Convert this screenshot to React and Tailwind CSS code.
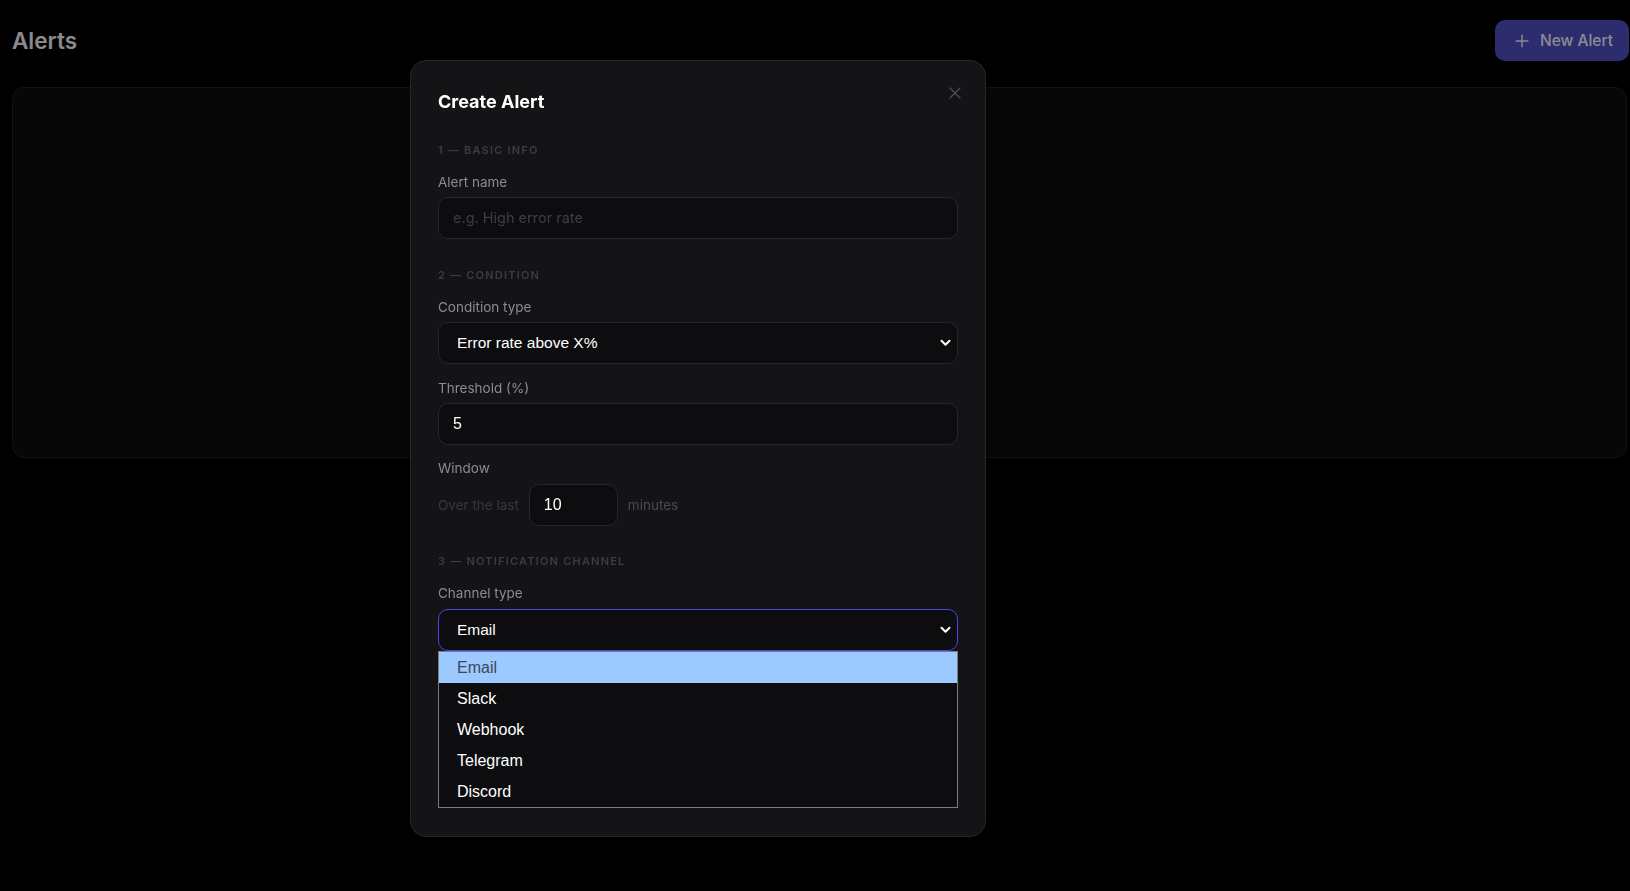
import { Plus, X } from 'lucide-react';

const sans = "font-['Inter',sans-serif]";
const field = "font-['Liberation_Sans',Arial,sans-serif]";

function SectionTitle({ children, className = '' }) {
  return (
    <div className={`text-[11px] leading-4 font-semibold tracking-[0.11em] uppercase text-[#3c3c42] ${className}`}>
      {children}
    </div>
  );
}

function Label({ children, className = '' }) {
  return <div className={`text-[13.5px] leading-5 text-[#8b8b91] ${className}`}>{children}</div>;
}

function Chevron() {
  return (
    <svg className="absolute right-[6px] top-1/2 -translate-y-1/2" width="11" height="8" viewBox="0 0 11 8" fill="none">
      <path d="M1.5 1.8 L5.5 5.8 L9.5 1.8" stroke="#ffffff" strokeWidth="2" strokeLinecap="round" strokeLinejoin="round" />
    </svg>
  );
}

function SelectBox({ value, focused }) {
  return (
    <div
      className={`relative h-[42px] rounded-[10px] border bg-[#0d0d10] flex items-center pl-[18px] ${field} text-[15.5px] text-white ${
        focused ? 'border-[#4646ec]' : 'border-[#26262b]'
      }`}
    >
      {value}
      <Chevron />
    </div>
  );
}

export default function App() {
  const options = ['Email', 'Slack', 'Webhook', 'Telegram', 'Discord'];

  return (
    <div className={`relative min-h-[891px] bg-black ${sans}`}>
      {/* Page */}
      <div className="pl-3 pr-[1px] pt-5">
        <div className="flex items-center justify-between h-[41px]">
          <h1 className="text-[22.5px] font-semibold text-[#e6e6e9] leading-7">Alerts</h1>
          <button className="flex items-center gap-2 h-[41px] pl-[17px] pr-4 rounded-[10px] bg-[#4a4ab9] text-[#e8e8f0] text-[15.5px] font-medium">
            <Plus size={20} strokeWidth={1.75} />
            New Alert
          </button>
        </div>
        <div className="mt-[26px] mr-[2px] h-[371px] rounded-xl border border-[#1e1e1e] bg-[#0c0c0c]" />
      </div>

      {/* Overlay */}
      <div className="fixed inset-0 bg-black/40">
        <div className="absolute left-[410px] top-[60px] w-[576px] rounded-2xl border border-[#26262a] bg-[#141416] px-[27px] pt-[27px] pb-[27px] shadow-2xl">
          <button className="absolute top-[22px] right-[20px] text-[#4e4e55]">
            <X size={20} strokeWidth={1.5} />
          </button>

          <h2 className="text-[18px] leading-7 font-bold text-white">Create Alert</h2>

          <SectionTitle className="mt-[26px]">1 — Basic info</SectionTitle>
          <Label className="mt-[14px]">Alert name</Label>
          <div className="mt-[5px] h-[42px] rounded-[10px] border border-[#26262b] bg-[#0d0d10] flex items-center px-3.5 text-[14.5px] text-[#3d3d44]">
            e.g. High error rate
          </div>

          <SectionTitle className="mt-[28px]">2 — Condition</SectionTitle>
          <Label className="mt-[14px]">Condition type</Label>
          <div className="mt-[5px]">
            <SelectBox value="Error rate above X%" />
          </div>

          <Label className="mt-[14px]">Threshold (%)</Label>
          <div className={`mt-[5px] h-[42px] rounded-[10px] border border-[#26262b] bg-[#0d0d10] flex items-center px-3.5 ${field} text-[16px] text-white`}>
            5
          </div>

          <Label className="mt-[13px]">Window</Label>
          <div className="mt-[6px] flex items-center gap-2.5 text-[13.5px]">
            <span className="text-[#38383e]">Over the last</span>
            <div className={`w-[89px] h-[42px] rounded-[10px] border border-[#26262b] bg-[#0d0d10] flex items-center px-3.5 ${field} text-[16px] text-white`}>
              10
            </div>
            <span className="text-[#4a4a50]">minutes</span>
          </div>

          <SectionTitle className="mt-[27px]">3 — Notification channel</SectionTitle>
          <Label className="mt-[14px]">Channel type</Label>
          <div className="relative mt-[6px]">
            <SelectBox value="Email" focused />
            <div className={`absolute left-0 right-0 top-[42px] z-10 border border-[#7b7b80] bg-[#0d0d10] ${field} text-[16px]`}>
              {options.map((o, i) => (
                <div
                  key={o}
                  className={`h-[31px] flex items-center pl-[18px] ${i === 0 ? 'bg-[#9cc9ff] text-[#3d4758]' : 'text-white'}`}
                >
                  {o}
                </div>
              ))}
            </div>
          </div>
          <div className="h-[158px]" />
        </div>
      </div>
    </div>
  );
}
